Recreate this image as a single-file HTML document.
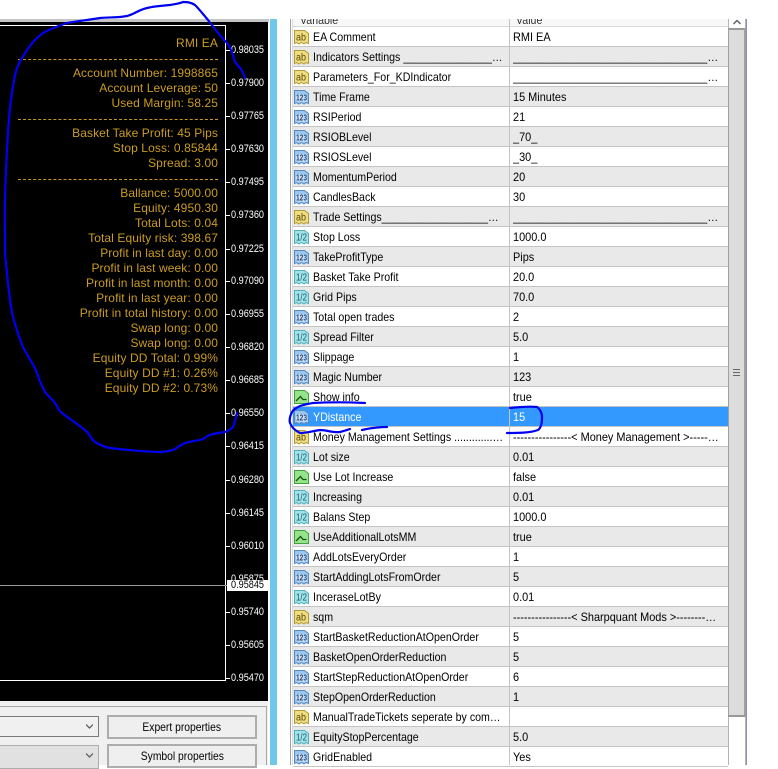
<!DOCTYPE html>
<html><head><meta charset="utf-8"><style>
html,body{margin:0;padding:0;background:#fff}
body{width:778px;height:765px;position:relative;overflow:hidden;font-family:"Liberation Sans",sans-serif;font-size:12px}
.a{position:absolute}
#bar{left:0;top:19px;width:269px;height:3px;background:#c4c4c4}
#chart{left:0;top:22px;width:268px;height:679px;background:#000}
#frame{left:-2px;top:25px;width:226px;height:654px;border:1px solid #fff}
.o{position:absolute;right:560px;color:#cb9c20;white-space:nowrap;line-height:15px;height:15px;letter-spacing:.1px}
.d{position:absolute;left:18px;width:200px;height:0;border-top:1px dashed #c8981e}
.p{position:absolute;left:231px;color:#fff;line-height:12px;height:12px;font-size:11px;transform:scaleX(.83);transform-origin:left center;white-space:nowrap}
.t{position:absolute;left:226px;width:4px;height:1px;background:#fff}
#low{left:0;top:701px;width:268px;height:64px;background:#f0f0f0}
#stripe{left:270px;top:19px;width:7px;height:746px;background:#6fc7ea}
.btn{position:absolute;left:107px;width:146px;height:20px;border:2px solid #adadad;background:#efefef;color:#000;text-align:center;line-height:20px}
.btn span{display:inline-block;transform:scaleX(.86)}
.sel{position:absolute;left:-2px;width:99px;height:19px;border:1px solid #7a7a7a}
.arr{position:absolute;right:5px;top:6px;width:7px;height:7px}
#tb{left:293px;top:27px;width:435px}
.r{height:19px;border-bottom:1px solid #c4c4c4;line-height:21px;position:relative;background:#fff;color:#000}
.r:nth-child(even){background:#e9e9e9}
.r svg{position:absolute;left:0;top:2px;width:17px;height:17px}
.n{position:absolute;left:20px;width:215px;height:19px;white-space:nowrap;overflow:hidden;text-overflow:ellipsis;transform:scaleX(.885);transform-origin:left center}
.v{position:absolute;left:220px;width:227px;height:19px;white-space:nowrap;overflow:hidden;text-overflow:ellipsis;transform:scaleX(.91);transform-origin:left center}
.r.s{background:#3399ff;color:#fff}
#col{left:509px;top:19px;width:1px;height:746px;background:#c4c4c4}
#hd{left:293px;top:19px;width:435px;height:8px;overflow:hidden;background:#f8f8f8;border-bottom:1px solid #d8d8d8;box-sizing:border-box;color:#333}
#hd span{position:absolute;top:-6px;line-height:14px;transform:scaleX(.885);transform-origin:left center}
#sb{left:728px;top:19px;width:18px;height:746px;border-left:1px solid #b4b4b4;border-right:1px solid #b4b4b4;box-sizing:border-box}
#th{left:728px;top:28px;width:18px;height:689px;background:#dcdcdc;border-top:2px solid #999;border-bottom:2px solid #999;border-left:1px solid #a0a0a0;border-right:2px solid #a0a0a0;box-sizing:border-box}
</style></head><body>
<svg width="0" height="0" style="position:absolute"><defs>
<symbol id="ab" viewBox="0 0 17 17"><path d="M1.500 1.500H11.500L15.500 4.500V14.500L13 13.500 11 15 8.500 13.500 6 15 3.500 13.500 1.500 14.500Z" fill="#f0dd80" stroke="#b09a3c"/><text x="3" y="11.500" font-size="10" font-family="Liberation Sans" textLength="10" lengthAdjust="spacingAndGlyphs" fill="#5a4a08">ab</text></symbol>
<symbol id="n" viewBox="0 0 17 17"><path d="M1.500 1.500H11.500L15.500 4.500V14.500L13 13.500 11 15 8.500 13.500 6 15 3.500 13.500 1.500 14.500Z" fill="#9cc6ee" stroke="#5289c0"/><rect x="3" y="5.500" width="11" height="7" fill="#d4e6f8"/><text x="3" y="11.500" font-size="8" font-weight="bold" font-family="Liberation Sans" textLength="11" lengthAdjust="spacingAndGlyphs" fill="#1c4278">123</text></symbol>
<symbol id="f" viewBox="0 0 17 17"><path d="M1.500 1.500H11.500L15.500 4.500V14.500L13 13.500 11 15 8.500 13.500 6 15 3.500 13.500 1.500 14.500Z" fill="#a0e4ea" stroke="#50aeb8"/><text x="3" y="11.500" font-size="10" font-family="Liberation Sans" textLength="11" lengthAdjust="spacingAndGlyphs" fill="#1c5862">1/2</text></symbol>
<symbol id="b" viewBox="0 0 17 17"><path d="M1.500 1.500H11.500L15.500 4.500V14.500H1.500Z" fill="#96e48a" stroke="#3fa03f"/><path d="M3 12 7.500 7.500 10 10.500H13.500" fill="none" stroke="#155215" stroke-width="1.300"/></symbol>
</defs></svg>

<div class="a" id="bar"></div>
<div class="a" id="chart"></div>
<div class="a" id="frame"></div>
<div class="a" style="left:0;top:585px;width:227px;height:1px;background:#9a9a9a"></div>

<div class="o" style="top:36px">RMI EA</div><div class="d" style="top:59px"></div>
<div class="o" style="top:66px">Account Number: 1998865</div>
<div class="o" style="top:81px">Account Leverage: 50</div>
<div class="o" style="top:96px">Used Margin: 58.25</div><div class="d" style="top:119px"></div>
<div class="o" style="top:126px">Basket Take Profit: 45 Pips</div>
<div class="o" style="top:141px">Stop Loss: 0.85844</div>
<div class="o" style="top:156px">Spread: 3.00</div><div class="d" style="top:179px"></div>
<div class="o" style="top:186px">Ballance: 5000.00</div>
<div class="o" style="top:201px">Equity: 4950.30</div>
<div class="o" style="top:216px">Total Lots: 0.04</div>
<div class="o" style="top:231px">Total Equity risk: 398.67</div>
<div class="o" style="top:246px">Profit in last day: 0.00</div>
<div class="o" style="top:261px">Profit in last week: 0.00</div>
<div class="o" style="top:276px">Profit in last month: 0.00</div>
<div class="o" style="top:291px">Profit in last year: 0.00</div>
<div class="o" style="top:306px">Profit in total history: 0.00</div>
<div class="o" style="top:321px">Swap long: 0.00</div>
<div class="o" style="top:336px">Swap long: 0.00</div>
<div class="o" style="top:351px">Equity DD Total: 0.99%</div>
<div class="o" style="top:366px">Equity DD #1: 0.26%</div>
<div class="o" style="top:381px">Equity DD #2: 0.73%</div>

<div class="p" style="top:44px">0.98035</div><div class="t" style="top:50px"></div>
<div class="p" style="top:77px">0.97900</div><div class="t" style="top:83px"></div>
<div class="p" style="top:110px">0.97765</div><div class="t" style="top:116px"></div>
<div class="p" style="top:143px">0.97630</div><div class="t" style="top:149px"></div>
<div class="p" style="top:176px">0.97495</div><div class="t" style="top:182px"></div>
<div class="p" style="top:209px">0.97360</div><div class="t" style="top:215px"></div>
<div class="p" style="top:243px">0.97225</div><div class="t" style="top:249px"></div>
<div class="p" style="top:275px">0.97090</div><div class="t" style="top:281px"></div>
<div class="p" style="top:308px">0.96955</div><div class="t" style="top:314px"></div>
<div class="p" style="top:341px">0.96820</div><div class="t" style="top:347px"></div>
<div class="p" style="top:374px">0.96685</div><div class="t" style="top:380px"></div>
<div class="p" style="top:407px">0.96550</div><div class="t" style="top:413px"></div>
<div class="p" style="top:440px">0.96415</div><div class="t" style="top:446px"></div>
<div class="p" style="top:474px">0.96280</div><div class="t" style="top:480px"></div>
<div class="p" style="top:507px">0.96145</div><div class="t" style="top:513px"></div>
<div class="p" style="top:540px">0.96010</div><div class="t" style="top:546px"></div>
<div class="p" style="top:573px">0.95875</div>
<div class="a" style="left:227px;top:580px;width:41px;height:11px;background:#fff"></div>
<div class="p" style="top:579px;color:#000">0.95845</div>
<div class="p" style="top:606px">0.95740</div><div class="t" style="top:612px"></div>
<div class="p" style="top:639px">0.95605</div><div class="t" style="top:645px"></div>
<div class="p" style="top:672px">0.95470</div><div class="t" style="top:678px"></div>

<div class="a" id="low">
 <div class="a" style="left:0;top:5px;width:267px;height:1px;background:#a8a8a8"></div>
 <div class="a" style="left:266px;top:5px;width:1px;height:59px;background:#a8a8a8"></div>
 <div class="sel" style="top:15px;background:#f0f0f0"><svg class="arr" viewBox="0 0 7 7"><path d="M0 1.500 3.500 5 7 1.500" fill="none" stroke="#555" stroke-width="1.200"/></svg></div>
 <div class="sel" style="top:44px;height:22px;background:#e1e1e1;border-color:#adadad"><svg class="arr" viewBox="0 0 7 7"><path d="M0 1.500 3.500 5 7 1.500" fill="none" stroke="#555" stroke-width="1.200"/></svg></div>
 <div class="btn" style="top:14px"><span>Expert properties</span></div>
 <div class="btn" style="top:43px"><span>Symbol properties</span></div>
</div>
<div class="a" id="stripe"></div>

<div class="a" style="left:290px;top:19px;width:1px;height:746px;background:#a0a0a0"></div>
<div class="a" style="left:292px;top:19px;width:1px;height:746px;background:#dcdcdc"></div>
<div class="a" id="hd"><span style="left:7px">Variable</span><span style="left:223px">Value</span></div>
<div class="a" id="tb">
<div class="r"><svg><use href="#ab"/></svg><div class="n">EA Comment</div><div class="v">RMI EA</div></div>
<div class="r"><svg><use href="#ab"/></svg><div class="n">Indicators Settings ______________________________</div><div class="v">______________________________________________________________</div></div>
<div class="r"><svg><use href="#ab"/></svg><div class="n">Parameters_For_KDIndicator</div><div class="v">______________________________________________________________</div></div>
<div class="r"><svg><use href="#n"/></svg><div class="n">Time Frame</div><div class="v">15 Minutes</div></div>
<div class="r"><svg><use href="#n"/></svg><div class="n">RSIPeriod</div><div class="v">21</div></div>
<div class="r"><svg><use href="#n"/></svg><div class="n">RSIOBLevel</div><div class="v">_70_</div></div>
<div class="r"><svg><use href="#n"/></svg><div class="n">RSIOSLevel</div><div class="v">_30_</div></div>
<div class="r"><svg><use href="#n"/></svg><div class="n">MomentumPeriod</div><div class="v">20</div></div>
<div class="r"><svg><use href="#n"/></svg><div class="n">CandlesBack</div><div class="v">30</div></div>
<div class="r"><svg><use href="#ab"/></svg><div class="n">Trade Settings______________________________</div><div class="v">______________________________________________________________</div></div>
<div class="r"><svg><use href="#f"/></svg><div class="n">Stop Loss</div><div class="v">1000.0</div></div>
<div class="r"><svg><use href="#n"/></svg><div class="n">TakeProfitType</div><div class="v">Pips</div></div>
<div class="r"><svg><use href="#f"/></svg><div class="n">Basket Take Profit</div><div class="v">20.0</div></div>
<div class="r"><svg><use href="#f"/></svg><div class="n">Grid Pips</div><div class="v">70.0</div></div>
<div class="r"><svg><use href="#n"/></svg><div class="n">Total open trades</div><div class="v">2</div></div>
<div class="r"><svg><use href="#f"/></svg><div class="n">Spread Filter</div><div class="v">5.0</div></div>
<div class="r"><svg><use href="#n"/></svg><div class="n">Slippage</div><div class="v">1</div></div>
<div class="r"><svg><use href="#n"/></svg><div class="n">Magic Number</div><div class="v">123</div></div>
<div class="r"><svg><use href="#b"/></svg><div class="n">Show info</div><div class="v">true</div></div>
<div class="r s"><svg><use href="#n"/></svg><div class="n">YDistance</div><div class="v">15</div></div>
<div class="r"><svg><use href="#ab"/></svg><div class="n">Money Management Settings ..............................</div><div class="v">----------------&lt; Money Management &gt;---------------------------</div></div>
<div class="r"><svg><use href="#f"/></svg><div class="n">Lot size</div><div class="v">0.01</div></div>
<div class="r"><svg><use href="#b"/></svg><div class="n">Use Lot Increase</div><div class="v">false</div></div>
<div class="r"><svg><use href="#f"/></svg><div class="n">Increasing</div><div class="v">0.01</div></div>
<div class="r"><svg><use href="#f"/></svg><div class="n">Balans Step</div><div class="v">1000.0</div></div>
<div class="r"><svg><use href="#b"/></svg><div class="n">UseAdditionalLotsMM</div><div class="v">true</div></div>
<div class="r"><svg><use href="#n"/></svg><div class="n">AddLotsEveryOrder</div><div class="v">1</div></div>
<div class="r"><svg><use href="#n"/></svg><div class="n">StartAddingLotsFromOrder</div><div class="v">5</div></div>
<div class="r"><svg><use href="#f"/></svg><div class="n">InceraseLotBy</div><div class="v">0.01</div></div>
<div class="r"><svg><use href="#ab"/></svg><div class="n">sqm</div><div class="v">----------------&lt; Sharpquant Mods &gt;---------------------------</div></div>
<div class="r"><svg><use href="#n"/></svg><div class="n">StartBasketReductionAtOpenOrder</div><div class="v">5</div></div>
<div class="r"><svg><use href="#n"/></svg><div class="n">BasketOpenOrderReduction</div><div class="v">5</div></div>
<div class="r"><svg><use href="#n"/></svg><div class="n">StartStepReductionAtOpenOrder</div><div class="v">6</div></div>
<div class="r"><svg><use href="#n"/></svg><div class="n">StepOpenOrderReduction</div><div class="v">1</div></div>
<div class="r"><svg><use href="#ab"/></svg><div class="n">ManualTradeTickets seperate by comma and more text</div><div class="v"></div></div>
<div class="r"><svg><use href="#f"/></svg><div class="n">EquityStopPercentage</div><div class="v">5.0</div></div>
<div class="r"><svg><use href="#n"/></svg><div class="n">GridEnabled</div><div class="v">Yes</div></div>
</div>
<div class="a" id="col"></div>

<div class="a" id="sb"></div>
<div class="a" id="th"></div>
<div class="a" style="left:746px;top:19px;width:1px;height:746px;background:#8f8fb0"></div>
<svg class="a" style="left:729px;top:19px" width="16" height="8"><path d="M4.500 5 8 1.500 11.500 5" fill="none" stroke="#666" stroke-width="1.500"/></svg>
<div class="a" style="left:733px;top:369px;width:7px;height:7px;background:repeating-linear-gradient(#666 0 1px,#dcdcdc 1px 3px)"></div>

<svg class="a" style="left:0;top:0" width="778" height="765" fill="none" stroke="#0000f0" stroke-width="2.200" stroke-linecap="round" stroke-linejoin="round">
<path d="M245 78C243 70 238 66 235 62 233 54 231 48 227 43 220 36 214 28 208 20 203 14 199 9 195 5 190 2 187 2 183 2 178 4 175 4 170 5 160 6 155 6 147 8 138 10 133 15 127 16 117 18 110 17 100 18 88 20 78 21 67 23 58 26 50 29 43 33 36 38 31 44 27 50 21 59 17 66 15 75 11 95 9 115 8 133 6 165 4 200 5 233 5 245 5 250 5 253 7 275 9 295 12 313 15 325 19 337 23 347 27 355 31 361 35 368 38 376 41 385 45 392 49 397 52 399 55 403 58 408 59 411 62 413 72 421 80 425 88 433 91 437 92 440 95 442 100 445 104 447 110 448 128 450 145 452 160 452 165 452 169 451 173 450 177 448 179 446 183 444 190 441 197 441 203 439 206 437 207 436 210 435 215 433 220 433 225 432 228 431 231 429 233 427 235 422 236 418 237 413"/>
<path d="M365 403C345 402 330 402 313 403 307 404 303 405 300 406 296 408 293 410 292 412 290 416 289 420 290 423 292 428 296 431 300 433 307 433 313 431 320 430 327 430 333 433 340 432 344 431 347 430 350 429"/>
<path d="M362 430C370 428 378 427 387 427"/>
<path d="M510 408C519 407 528 406 537 407 540 409 542 413 542 417 542 423 541 428 538 430 530 433 518 433 507 433"/>
</svg>
</body></html>
